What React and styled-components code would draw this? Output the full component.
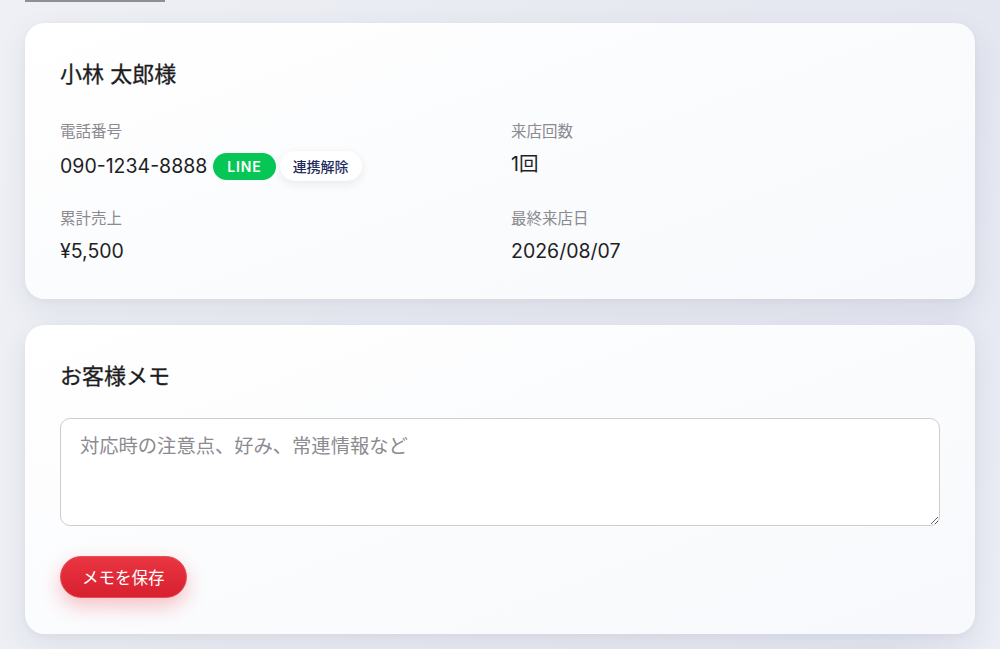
import React from "react";
import styled, { createGlobalStyle } from "styled-components";

const Global = createGlobalStyle`
  html, body { margin: 0; padding: 0; }
  body {
    background: linear-gradient(100deg, #eef0f5 0%, #e7e9f1 60%, #e4e7f0 90%, #eceef6 100%);
    font-family: Inter, "Noto Sans CJK JP", sans-serif;
    color: #1f1f24;
    min-height: 649px;
    overflow: hidden;
  }
`;

const Page = styled.div`
  padding: 0 25px 20px;
  display: flex;
  flex-direction: column;
  gap: 26px;
`;

const PrevTail = styled.div`
  width: 140px;
  height: 2px;
  background: #8e8e93;
  margin-bottom: -5px;
`;

const Card = styled.section`
  background: linear-gradient(160deg, #ffffff 0%, #fafbfd 60%, #f8f9fc 100%);
  border-radius: 20px;
  box-shadow: 0 10px 30px rgba(40, 50, 90, 0.08), 0 2px 6px rgba(40, 50, 90, 0.04);
  padding: 36px 35px ${(p) => p.$pb}px;
`;

const Title = styled.h2`
  margin: 0 0 ${(p) => p.$gap}px;
  font-size: 22px;
  line-height: 31px;
  font-weight: 400;
  -webkit-text-stroke: 0.3px #1c1c21;
  color: #1c1c21;
`;

const InfoGrid = styled.div`
  display: grid;
  grid-template-columns: 1fr 1fr;
  column-gap: 22px;
  row-gap: 26px;
`;

const Field = styled.div`
  display: flex;
  flex-direction: column;
  gap: 8px;
`;

const Label = styled.div`
  font-size: 15.5px;
  line-height: 23px;
  color: #8a8a90;
`;

const Value = styled.div`
  display: flex;
  align-items: center;
  gap: 6px;
  font-size: 19.5px;
  line-height: 27px;
  color: #1f1f24;
`;

const LineBadge = styled.span`
  display: inline-flex;
  align-items: center;
  height: 27px;
  padding: 0 14px;
  border-radius: 14px;
  background: #06c755;
  color: #fff;
  font-size: 14px;
  font-weight: 600;
  letter-spacing: 0.06em;
`;

const UnlinkButton = styled.button`
  display: inline-flex;
  align-items: center;
  height: 30px;
  margin-left: -2px;
  padding: 0 13px;
  border: none;
  border-radius: 15px;
  background: #ffffff;
  box-shadow: 0 3px 10px rgba(30, 40, 80, 0.09);
  color: #1d2a5c;
  font-family: inherit;
  font-size: 14px;
  font-weight: 500;
`;

const MemoArea = styled.textarea`
  display: block;
  width: 100%;
  box-sizing: border-box;
  height: 108px;
  padding: 13px 19px;
  border: 1px solid #cdcdd2;
  border-radius: 10px;
  background: #ffffff;
  font-family: inherit;
  font-size: 19.3px;
  line-height: 28px;
  color: #1f1f24;
  resize: vertical;
  outline: none;
  &::placeholder { color: #8b8b90; }
`;

const SaveButton = styled.button`
  margin-top: 30px;
  height: 42px;
  padding: 0 21px;
  border: 1px solid #e2505a;
  border-radius: 21px;
  background: linear-gradient(180deg, #ea3542 0%, #d8202f 100%);
  color: #fff;
  font-family: inherit;
  font-size: 16.5px;
  font-weight: 400;
  box-shadow: 0 8px 20px rgba(230, 40, 55, 0.28);
`;

export default function App() {
  return (
    <>
      <Global />
      <Page>
        <PrevTail />
        <Card $pb={34}>
          <Title $gap={30}>小林 太郎様</Title>
          <InfoGrid>
            <Field>
              <Label>電話番号</Label>
              <Value>
                090-1234-8888
                <LineBadge>LINE</LineBadge>
                <UnlinkButton>連携解除</UnlinkButton>
              </Value>
            </Field>
            <Field>
              <Label>来店回数</Label>
              <Value>1回</Value>
            </Field>
            <Field>
              <Label>累計売上</Label>
              <Value>¥5,500</Value>
            </Field>
            <Field>
              <Label>最終来店日</Label>
              <Value>2026/08/07</Value>
            </Field>
          </InfoGrid>
        </Card>
        <Card $pb={36}>
          <Title $gap={26}>お客様メモ</Title>
          <MemoArea placeholder="対応時の注意点、好み、常連情報など" />
          <SaveButton>メモを保存</SaveButton>
        </Card>
      </Page>
    </>
  );
}
